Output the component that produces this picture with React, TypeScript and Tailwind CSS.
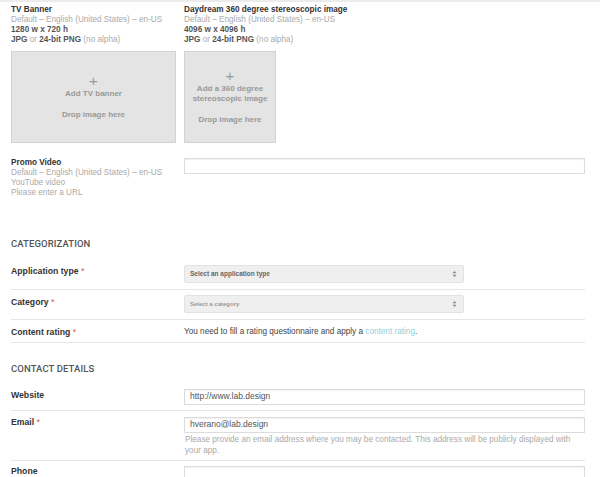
import type { ReactNode } from 'react';

const font = { fontFamily: '"Liberation Sans", Arial, sans-serif' };

function MediaSlot({
  title,
  dims,
  add,
  width,
}: {
  title: string;
  dims: string;
  add: ReactNode;
  width: string;
}) {
  return (
    <div className="flex flex-col">
      <div className="text-[8.2px] leading-[10px] font-bold text-[#333]">{title}</div>
      <div className="text-[8.2px] leading-[10px] text-[#aaa]">Default – English (United States) – en-US</div>
      <div className="text-[8.2px] leading-[10px] font-bold text-[#555]">{dims}</div>
      <div className="text-[8.2px] leading-[10px] text-[#aaa]">
        <span className="font-bold text-[#555]">JPG</span> or{' '}
        <span className="font-bold text-[#555]">24-bit PNG</span> (no alpha)
      </div>
      <div
        className={`mt-[6px] h-[92px] ${width} bg-[#e4e4e4] border border-[#d2d2d2] flex flex-col items-center justify-center text-center text-[8px] leading-[10px] font-bold text-[#999]`}
      >
        <span className="text-[15px] leading-[12px] font-normal text-[#999]">+</span>
        <span className="mt-[2px]">{add}</span>
        <span className="mt-[11px]">Drop image here</span>
      </div>
    </div>
  );
}

function Row({
  label,
  required,
  children,
  last,
  labelPad = 'pt-[6px]',
  className = '',
}: {
  label: string;
  required?: boolean;
  children: ReactNode;
  last?: boolean;
  labelPad?: string;
  className?: string;
}) {
  return (
    <div
      className={`grid grid-cols-[173px_401px] ${last ? '' : 'border-b border-[#e6e6e6]'} ${className}`}
    >
      <div className={`text-[8.7px] font-bold text-[#333] ${labelPad}`}>
        {label}
        {required && <span className="text-[#d55] font-normal"> *</span>}
      </div>
      <div>{children}</div>
    </div>
  );
}

function SelectBox({ text, small }: { text: string; small?: boolean }) {
  return (
    <div className="w-[280px] h-[18px] bg-[#efefef] border border-[#e2e2e2] rounded-[2px] flex items-center justify-between px-[5px]">
      <span className={`${small ? 'text-[6px] text-[#999]' : 'text-[6.5px] text-[#666]'} font-bold`}>{text}</span>
      <svg width="5" height="8" viewBox="0 0 5 8" className="mr-[1px]">
        <path d="M0.5 3.2 L2.5 1 L4.5 3.2 Z M0.5 4.8 L2.5 7 L4.5 4.8 Z" fill="#888" />
      </svg>
    </div>
  );
}

function TextBox({ value }: { value?: string }) {
  return (
    <div className="w-[401px] h-[16px] border border-[#dcdcdc] shadow-[inset_0_1px_1px_rgba(0,0,0,0.06)] flex items-center px-[5px] text-[8.5px] text-[#555] bg-white">
      {value}
    </div>
  );
}

export default function App() {
  const heading = { fontFamily: 'Roboto, sans-serif' };
  return (
    <div className="w-[600px] h-[477px] overflow-hidden bg-white border-t-[2px] border-[#ececec]" style={font}>
      <div className="pl-[11px] pt-[3px]">
        <div className="flex gap-[8px]">
          <MediaSlot title="TV Banner" dims="1280 w x 720 h" add="Add TV banner" width="w-[165px]" />
          <MediaSlot
            title="Daydream 360 degree stereoscopic image"
            dims="4096 w x 4096 h"
            add={
              <>
                Add a 360 degree
                <br />
                stereoscopic image
              </>
            }
            width="w-[92px]"
          />
        </div>

        <div className="grid grid-cols-[173px_401px] mt-[14px]">
          <div className="text-[8.2px] leading-[10px] pt-[1px]">
            <div className="font-bold text-[#333]">Promo Video</div>
            <div className="text-[#aaa]">Default – English (United States) – en-US</div>
            <div className="text-[#aaa]">YouTube video</div>
            <div className="text-[#aaa]">Please enter a URL</div>
          </div>
          <div className="pt-[1px]">
            <TextBox />
          </div>
        </div>

        <div className="mt-[39px] text-[9.5px] font-medium text-[#555] tracking-[0.1px]" style={heading}>
          CATEGORIZATION
        </div>

        <div className="w-[574px] mt-[11px]">
          <Row label="Application type" required labelPad="pt-[3px]" className="h-[28px]">
            <div className="pt-[3px]">
              <SelectBox text="Select an application type" />
            </div>
          </Row>
          <Row label="Category" required className="h-[30px]">
            <div className="pt-[5px]">
              <SelectBox text="Select a category" small />
            </div>
          </Row>
          <Row label="Content rating" required className="h-[23px]">
            <div className="pt-[6px] text-[8.2px] text-[#444]">
              You need to fill a rating questionnaire and apply a{' '}
              <span className="text-[#8fd0dc]">content rating</span>.
            </div>
          </Row>
        </div>

        <div className="mt-[19px] text-[9.5px] font-medium text-[#555] tracking-[0.1px]" style={heading}>
          CONTACT DETAILS
        </div>

        <div className="w-[574px] mt-[11px]">
          <Row label="Website" labelPad="pt-[1px]" className="h-[23px]">
            <div className="pt-[1px]">
              <TextBox value="http://www.lab.design" />
            </div>
          </Row>
          <Row label="Email" required labelPad="pt-[5px]" className="h-[50px]">
            <div className="pt-[6px]">
              <TextBox value="hverano@lab.design" />
              <div className="mt-[1px] text-[8.2px] leading-[11px] text-[#aaa] pl-[1px] pr-[10px]">
                Please provide an email address where you may be contacted. This address will be publicly displayed with your app.
              </div>
            </div>
          </Row>
          <Row label="Phone" last labelPad="pt-[4px]" className="h-[30px]">
            <div className="pt-[5px]">
              <TextBox />
            </div>
          </Row>
        </div>
      </div>
    </div>
  );
}
